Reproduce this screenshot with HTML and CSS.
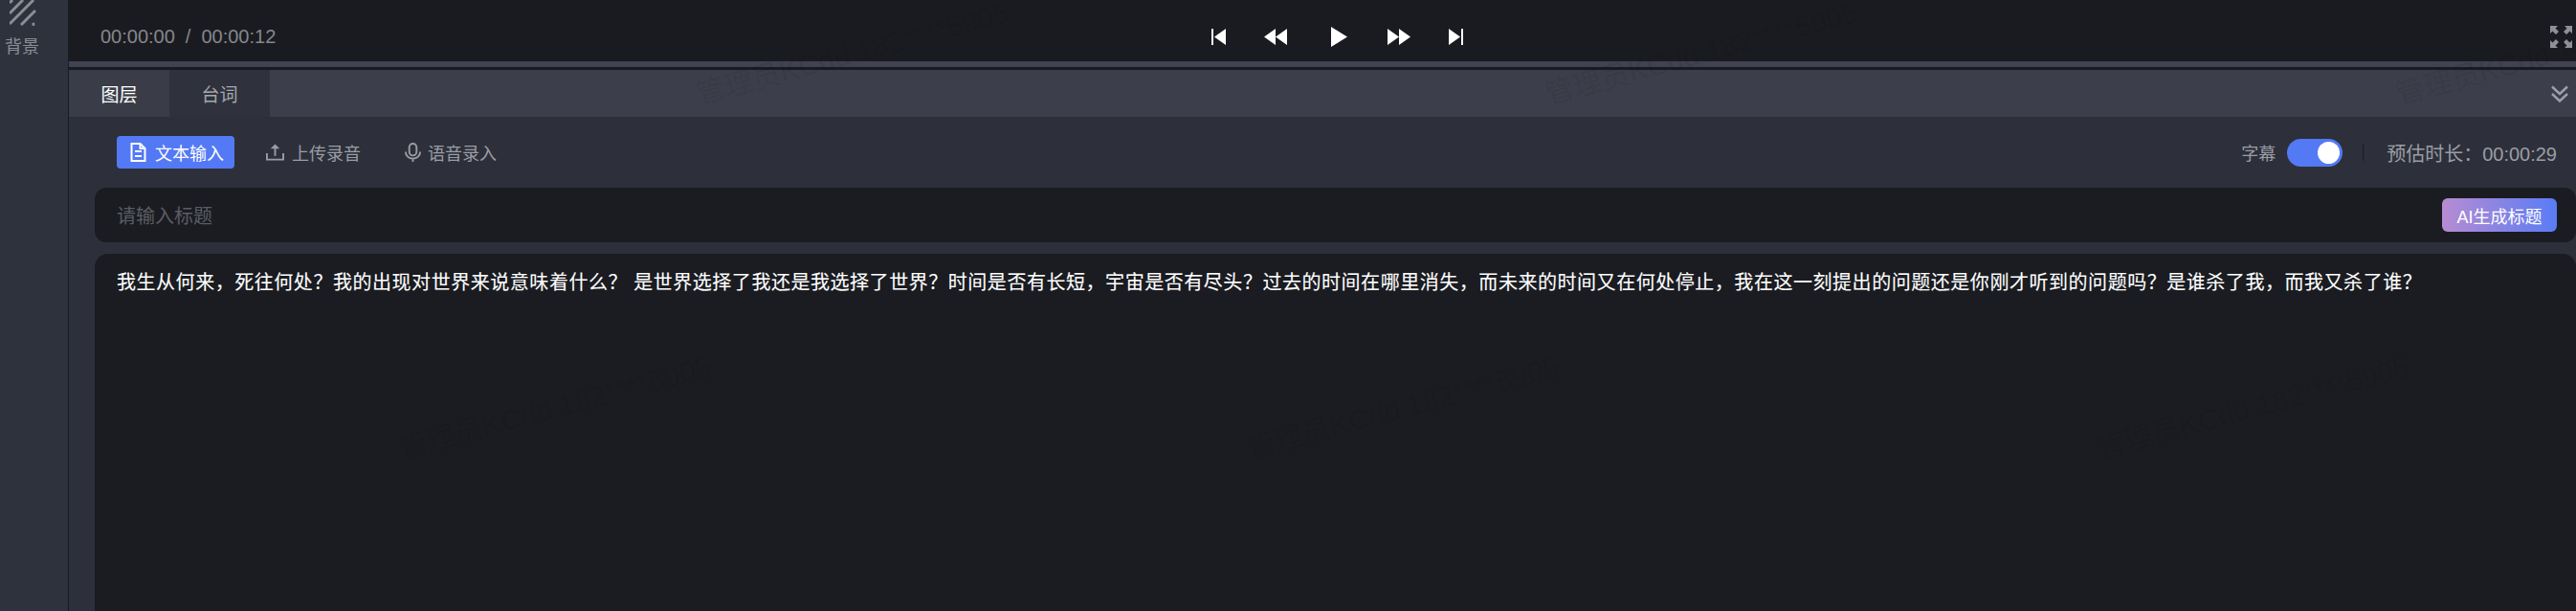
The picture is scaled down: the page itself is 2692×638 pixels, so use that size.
FILE: index.html
```html
<!DOCTYPE html>
<html lang="zh-CN">
<head>
    <meta charset="UTF-8">
    <title>台词</title>
    <link rel="stylesheet" href="styles.css">
</head>
<body>
    <div class="page">
        <aside class="sidebar">
            <svg class="bg-icon" viewBox="0 0 28 28" fill="none" stroke="currentColor" stroke-width="3">
                <path d="M0 3 3 0M0 14 14 0M0 25 25 0M12 26 27 11"/>
                <path d="M23.500 25.300h2.800"/>
            </svg>
            <span class="sidebar-label">背景</span>
        </aside>

        <main class="main">
            <div class="player">
                <div class="time">
                    <span>00:00:00</span>
                    <span class="time-sep">/</span>
                    <span>00:00:12</span>
                </div>
                <div class="transport">
                    <svg class="ic-s" viewBox="0 0 15 17" fill="#fff"><path d="M0 0h2v17H0zM15 0v17L3 8.5z"/></svg>
                    <svg class="ic-m" viewBox="0 0 24 17" fill="#fff"><path d="M12 0v17L0 8.5zM24 0v17L12 8.5z"/></svg>
                    <svg class="ic-play" viewBox="0 0 17 21" fill="#fff"><path d="M0 0l17 10.5L0 21z"/></svg>
                    <svg class="ic-m" viewBox="0 0 24 17" fill="#fff"><path d="M0 0v17l12-8.500zM12 0v17l12-8.500z"/></svg>
                    <svg class="ic-s" viewBox="0 0 15 17" fill="#fff"><path d="M13 0h2v17h-2zM0 0v17l12-8.500z"/></svg>
                </div>
                <svg class="ic-full" viewBox="0 0 23 23" fill="#8d9098">
                    <path d="M0 0h8L5.500 2.500 9 6 6 9 2.500 5.500 0 8z"/>
                    <path d="M23 0h-8l2.500 2.500L14 6l3 3 3.500-3.500L23 8z"/>
                    <path d="M0 23h8l-2.500-2.500L9 17l-3-3-3.500 3.500L0 15z"/>
                    <path d="M23 23h-8l2.500-2.500L14 17l3-3 3.500 3.500L23 15z"/>
                </svg>
            </div>
            <div class="strip"></div>

            <div class="tabs">
                <div class="tab tab-active">图层</div>
                <div class="tab">台词</div>
                <svg class="ic-collapse" viewBox="0 0 18 18" fill="none" stroke="#9da0a8" stroke-width="2.400">
                    <path d="M1 1.500 9 9l8-7.500M1 9l8 7.500L17 9"/>
                </svg>
            </div>

            <div class="panel">
                <div class="toolbar">
                    <div class="mode mode-active">
                        <svg class="ic-mode" viewBox="0 0 18 20" fill="none" stroke="currentColor" stroke-width="2">
                            <path d="M2 1h9l5 5v13H2z"/>
                            <path d="M5.500 9h7M5.500 14h7M11 1v5h5"/>
                        </svg>
                        文本输入
                    </div>
                    <div class="mode">
                        <svg class="ic-mode" viewBox="0 0 20 20" fill="none" stroke="currentColor" stroke-width="2">
                            <path d="M1 11v7h18v-7"/>
                            <path d="M10 14V5"/>
                            <path d="M10 1l5 5H5z" fill="currentColor" stroke="none"/>
                        </svg>
                        上传录音
                    </div>
                    <div class="mode mode-voice">
                        <svg class="ic-mode" viewBox="0 0 18 21" fill="none" stroke="currentColor" stroke-width="2">
                            <rect x="5" y="1" width="8" height="13" rx="4"/>
                            <path d="M1 10a8 7.500 0 0 0 16 0M9 17v4"/>
                        </svg>
                        语音录入
                    </div>
                    <div class="toolbar-right">
                        <span class="toggle-label">字幕</span>
                        <span class="toggle"><span class="toggle-knob"></span></span>
                        <span class="divider"></span>
                        <span class="duration">预估时长：00:00:29</span>
                    </div>
                </div>

                <div class="title-box">
                    <span class="placeholder">请输入标题</span>
                    <span class="ai-btn">AI生成标题</span>
                </div>

                <div class="editor">我生从何来，死往何处？我的出现对世界来说意味着什么？ 是世界选择了我还是我选择了世界？时间是否有长短，宇宙是否有尽头？过去的时间在哪里消失，而未来的时间又在何处停止，我在这一刻提出的问题还是你刚才听到的问题吗？是谁杀了我，而我又杀了谁？</div>
            </div>
        </main>

        <div class="wm wm-1">管理员KCdd 182****5905</div>
        <div class="wm wm-2">管理员KCdd 182****5905</div>
        <div class="wm wm-3">管理员KCdd 182****5905</div>
        <div class="wm wm-4">管理员KCdd 182****5905</div>
        <div class="wm wm-5">管理员KCdd 182****5905</div>
        <div class="wm wm-6">管理员KCdd 182****5905</div>
    </div>
</body>
</html>
```

FILE: styles.css
```css
* {
    box-sizing: border-box;
}

html, body {
    margin: 0;
    height: 100%;
    overflow: hidden;
}

body {
    font-family: "Liberation Sans", "Noto Sans CJK SC", sans-serif;
    background: #1a1c21;
    color: #9a9da5;
}

.page {
    position: relative;
    display: flex;
    height: 638px;
    overflow: hidden;
}

.sidebar {
    flex: 0 0 72px;
    display: flex;
    flex-direction: column;
    background: #2e323c;
    border-right: 1px solid #191b20;
    padding-left: 5px;
}

.bg-icon {
    width: 28px;
    height: 28px;
    margin-left: 5px;
    color: #8b8e96;
}

.sidebar-label {
    margin-top: 9px;
    font-size: 18px;
    line-height: 24px;
    color: #8b8e96;
}

.main {
    flex: 1;
    min-width: 0;
    display: flex;
    flex-direction: column;
    background: #1a1b21;
}

.player {
    height: 64px;
    display: grid;
    grid-template-columns: 1161px auto 1fr;
    align-items: center;
    padding: 12px 4px 0 33px;
    background: #1a1b20;
}

.time {
    display: flex;
    gap: 11px;
    font-size: 20px;
    color: #85878e;
}

.transport {
    display: flex;
    align-items: center;
    gap: 40px;
}

.ic-s {
    width: 15px;
    height: 17px;
}

.ic-m {
    width: 24px;
    height: 17px;
}

.ic-play {
    width: 17px;
    height: 21px;
    margin: 0 2px 0 6px;
}

.ic-full {
    width: 23px;
    height: 23px;
    justify-self: end;
}

.strip {
    height: 6px;
    background: #3f4352;
    margin-bottom: 3px;
}

.tabs {
    height: 49px;
    display: flex;
    align-items: center;
    background: #3c3f4b;
    padding-right: 8px;
}

.tab {
    width: 105px;
    height: 100%;
    display: flex;
    align-items: center;
    justify-content: center;
    font-size: 19px;
    background: #2f323c;
    color: #a6a8af;
}

.tab-active {
    background: #3a3d48;
    color: #fff;
}

.ic-collapse {
    width: 18px;
    height: 18px;
    margin-left: auto;
}

.panel {
    flex: 1;
    display: flex;
    flex-direction: column;
    background: #2d303a;
    padding-left: 27px;
}

.toolbar {
    height: 74px;
    display: flex;
    align-items: center;
    padding: 2px 20px 2px 23px;
    gap: 33px;
}

.mode {
    height: 34px;
    display: flex;
    align-items: center;
    gap: 8px;
    font-size: 18px;
    color: #9a9da5;
}

.mode-active {
    width: 123px;
    padding-left: 13px;
    background: #5479f5;
    border-radius: 4px;
    color: #fff;
}

.mode-voice {
    gap: 6px;
    margin-left: 12px;
}

.ic-mode {
    width: 19px;
    height: 20px;
}

.toolbar-right {
    margin-left: auto;
    display: flex;
    align-items: center;
}

.toggle-label {
    font-size: 18px;
    margin-right: 12px;
}

.toggle {
    width: 58px;
    height: 29px;
    padding: 3px;
    display: flex;
    justify-content: flex-end;
    border-radius: 15px;
    background: #5479f5;
}

.toggle-knob {
    width: 23px;
    height: 23px;
    border-radius: 50%;
    background: #fff;
}

.divider {
    width: 1px;
    height: 18px;
    margin: 0 24px 0 21px;
    background: #191b20;
}

.duration {
    font-size: 20px;
    color: #9a9da5;
}

.title-box {
    height: 57px;
    display: flex;
    align-items: center;
    justify-content: space-between;
    padding: 0 20px 0 23px;
    margin-bottom: 12px;
    background: #1a1c21;
    border-radius: 12px;
}

.placeholder {
    font-size: 20px;
    color: #5b5d63;
}

.ai-btn {
    width: 120px;
    height: 35px;
    display: flex;
    align-items: center;
    justify-content: center;
    font-size: 18px;
    color: #fff;
    border-radius: 6px;
    background: linear-gradient(90deg, #b78cd2, #5a7cf5);
}

.editor {
    flex: 1;
    padding: 17px 23px;
    background: #1a1c21;
    border-radius: 14px 14px 0 0;
    font-size: 20px;
    line-height: 27px;
    letter-spacing: 0.54px;
    color: #fff;
    -webkit-text-stroke: 0.1px #fff;
}

/* watermark, placed by its centre */
.wm {
    position: absolute;
    font-size: 30px;
    line-height: 24px;
    color: rgba(0, 0, 0, 0.08);
    transform: translate(-50%, -50%) rotate(-15deg);
    white-space: nowrap;
    pointer-events: none;
}

.wm-1 { left: 891px; top: 56px; }
.wm-2 { left: 1778px; top: 56px; }
.wm-3 { left: 2667px; top: 56px; }
.wm-4 { left: 580px; top: 426px; }
.wm-5 { left: 1466px; top: 426px; }
.wm-6 { left: 2354px; top: 426px; }
```
